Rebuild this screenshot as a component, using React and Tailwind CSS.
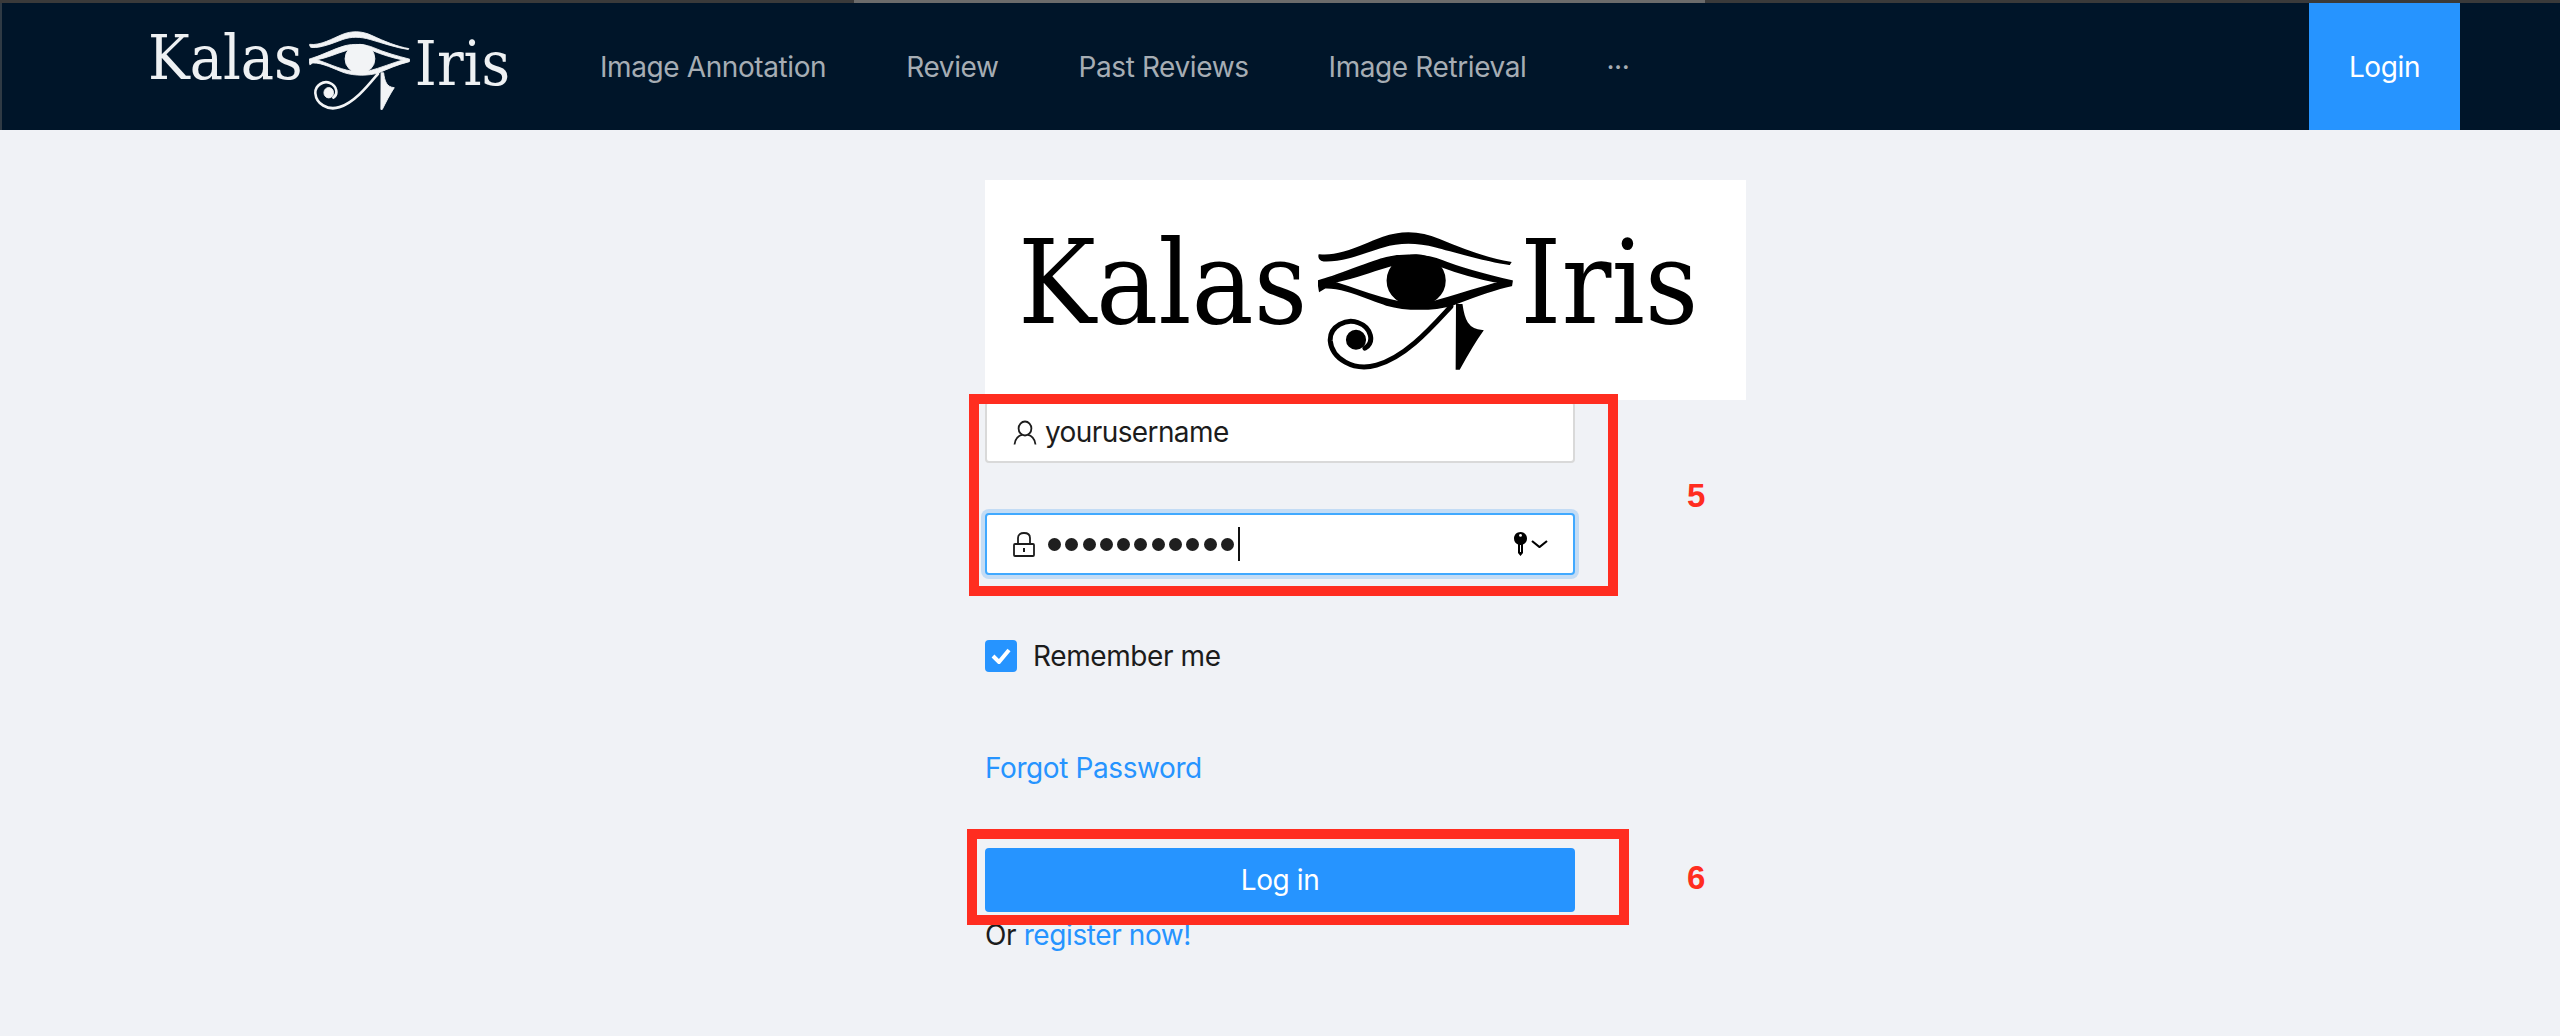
import React from "react";

const navItems = ["Image Annotation", "Review", "Past Reviews", "Image Retrieval", "···"];

// eye of horus mark, coordinates traced off the logo
const EyeMark = ({ className, color }) => (
  <svg viewBox="43 55 590 430" preserveAspectRatio="none" className={className} fill={color} stroke={color} strokeWidth="5">
    <path d="M47 132 C110 140 180 100 240 78 C290 60 350 58 410 85 C480 115 560 145 625 155 L622 160 C550 150 470 125 400 106 C340 90 290 90 240 106 C170 130 110 152 60 149 C50 149 45 140 47 132 Z" />
    <path
      fillRule="evenodd"
      d="M43 212 C110 195 190 155 250 140 C300 128 370 130 420 150 C480 175 560 195 630 212 L628 225 C560 240 500 265 450 285 C390 302 310 302 250 285 C190 265 120 230 65 232 L48 242 Z M88 215 C150 232 210 262 290 276 L390 276 C460 258 530 232 590 216 C530 205 470 188 410 165 C370 150 310 150 262 165 C200 182 150 205 88 215 Z"
    />
    <ellipse cx="340" cy="210" rx="87" ry="78" />
    <path d="M463 285 L478 285 C484 330 495 362 540 365 C515 400 490 445 470 482 L462 482 Z" />
    <path
      d="M445 290 C390 350 310 445 220 470 C150 490 85 450 80 395 C78 350 130 325 165 340 C205 355 215 400 185 418"
      fill="none"
      strokeWidth="15"
      strokeLinecap="round"
    />
    <circle cx="158" cy="392" r="28" />
  </svg>
);

const App = () => {
  return (
    <div className="h-[1036px] overflow-hidden bg-[#f0f2f6] font-['Inter',sans-serif] text-[28px] tracking-[-0.4px] text-[#1c1c1c]">
      {/* Top strip */}
      <div className="flex h-[3px] justify-center bg-[#3a3a3a]">
        <div className="ml-[-1px] h-[3px] w-[851px] bg-[#6b6b6b]" />
      </div>

      {/* Nav */}
      <header className="flex h-[127px] items-stretch border-l-2 border-[#2f3a44] bg-[#001529]">
        <div className="ml-[146px] flex w-[362px] items-start font-['DejaVu_Serif_Condensed','DejaVu_Serif',serif] text-[62px] leading-none tracking-normal text-[#eef1f3] [font-stretch:condensed]">
          <span className="mt-[24px]">Kalas</span>
          <EyeMark className="ml-[6px] mt-[27px] h-[80px] w-[104px]" color="#f2f4f6" />
          <span className="ml-[5px] mt-[30px]">Iris</span>
        </div>
        <nav className="ml-[50px] flex items-center">
          {navItems.map((item) => (
            <a key={item} className="px-10 text-[#a6adb4]">
              {item}
            </a>
          ))}
        </nav>
        <button className="ml-auto mr-[100px] w-[151px] bg-[#2694ff] text-white">Login</button>
      </header>

      {/* Login form */}
      <main className="relative ml-[985px] w-[761px] pt-[50px]">
        <div className="flex h-[220px] items-start bg-white pl-[33px] font-['DejaVu_Serif_Condensed','DejaVu_Serif',serif] text-[116px] leading-none tracking-normal text-black [font-stretch:condensed]">
          <span className="mt-[45px]">Kalas</span>
          <EyeMark className="ml-[11px] mt-[50px] h-[140px] w-[195px]" color="#000000" />
          <span className="ml-[7px] mt-[45px]">Iris</span>
        </div>

        <div className="w-[590px]">
          <div className="mt-px flex h-[62px] items-center rounded-[4px] border-2 border-[#d9d9d9] bg-white pl-[26px]">
            <svg viewBox="0 0 24 24" fill="none" stroke="#1c1c1c" strokeWidth="1.8" className="h-[25px] w-[24px]">
              <ellipse cx="12" cy="8" rx="6.4" ry="7" />
              <path d="M1.5 24 C2 18 6 15 9 14.4 M22.5 24 C22 18 18 15 15 14.4" />
            </svg>
            <span className="ml-[8px] tracking-[-0.6px] text-[#1c1c1c]">yourusername</span>
          </div>

          <div className="mt-[50px] flex h-[62px] items-center rounded-[4px] border-2 border-[#40a9ff] bg-white pl-[26px] shadow-[0_0_0_4px_#c3dcf5]">
            <svg viewBox="0 0 22 25" fill="none" stroke="#1c1c1c" strokeWidth="1.8" className="h-[25px] w-[22px]">
              <rect x="1" y="12" width="20" height="12" rx="1" />
              <path d="M5 12 V6 C5 2.5 7.5 1 11 1 C14.5 1 17 2.5 17 6 V12" />
              <rect x="10" y="16" width="2" height="4" fill="#1c1c1c" stroke="none" />
            </svg>
            <div className="ml-[13px] flex gap-[4.3px]">
              {Array.from({ length: 11 }).map((_, i) => (
                <span key={i} className="h-[13px] w-[13px] rounded-full bg-[#1f1f1f]" />
              ))}
            </div>
            <span className="ml-[4px] h-[34px] w-[2px] bg-[#111111]" />
            <svg viewBox="0 0 13 24" className="ml-[274px] h-[24px] w-[13px]" fill="#000000">
              <path d="M6.5 0 C10.2 0 13 2.8 13 6.4 C13 9.2 11.4 11.4 9 12.4 L9 21 L6.5 24 L4 21 L4 12.4 C1.6 11.4 0 9.2 0 6.4 C0 2.8 2.8 0 6.5 0 Z" />
              <circle cx="6.5" cy="3.4" r="1.4" fill="#ffffff" />
              <rect x="6" y="13" width="1" height="7" fill="#ffffff" />
            </svg>
            <svg viewBox="0 0 17 8" fill="none" stroke="#000000" strokeWidth="2.2" className="ml-[4px] h-[8px] w-[17px]">
              <path d="M1 1 L8.5 7 L16 1" />
            </svg>
          </div>

          <label className="mt-[65px] flex h-[32px] items-center">
            <span className="flex h-[32px] w-[32px] items-center justify-center rounded-[4px] bg-[#2694ff]">
              <svg viewBox="0 0 20 16" fill="none" stroke="#ffffff" strokeWidth="4" className="h-[16px] w-[20px]">
                <path d="M2 8 L8 14 L18 2" />
              </svg>
            </span>
            <span className="ml-[16px]">Remember me</span>
          </label>

          <a className="mt-[78px] block leading-[36px] text-[#2694ff]">Forgot Password</a>

          <button className="mt-[62px] h-[64px] w-full rounded-[4px] bg-[#2694ff] text-white">Log in</button>

          <p className="mt-[5px] leading-[36px]">
            Or <span className="text-[#2694ff]">register now!</span>
          </p>
        </div>

        {/* Annotations laid over the form */}
        <div className="absolute left-[-16px] top-[264px] h-[202px] w-[649px] border-[10px] border-[#ff2d20]" />
        <div className="absolute left-[-18px] top-[699px] h-[96px] w-[662px] border-[10px] border-[#ff2d20]" />
        <span className="absolute left-[702px] top-[349px] font-['Liberation_Sans',sans-serif] text-[33px] font-bold leading-[34px] text-[#ff2d20]">5</span>
        <span className="absolute left-[702px] top-[731px] font-['Liberation_Sans',sans-serif] text-[33px] font-bold leading-[34px] text-[#ff2d20]">6</span>
      </main>
    </div>
  );
};

export default App;
